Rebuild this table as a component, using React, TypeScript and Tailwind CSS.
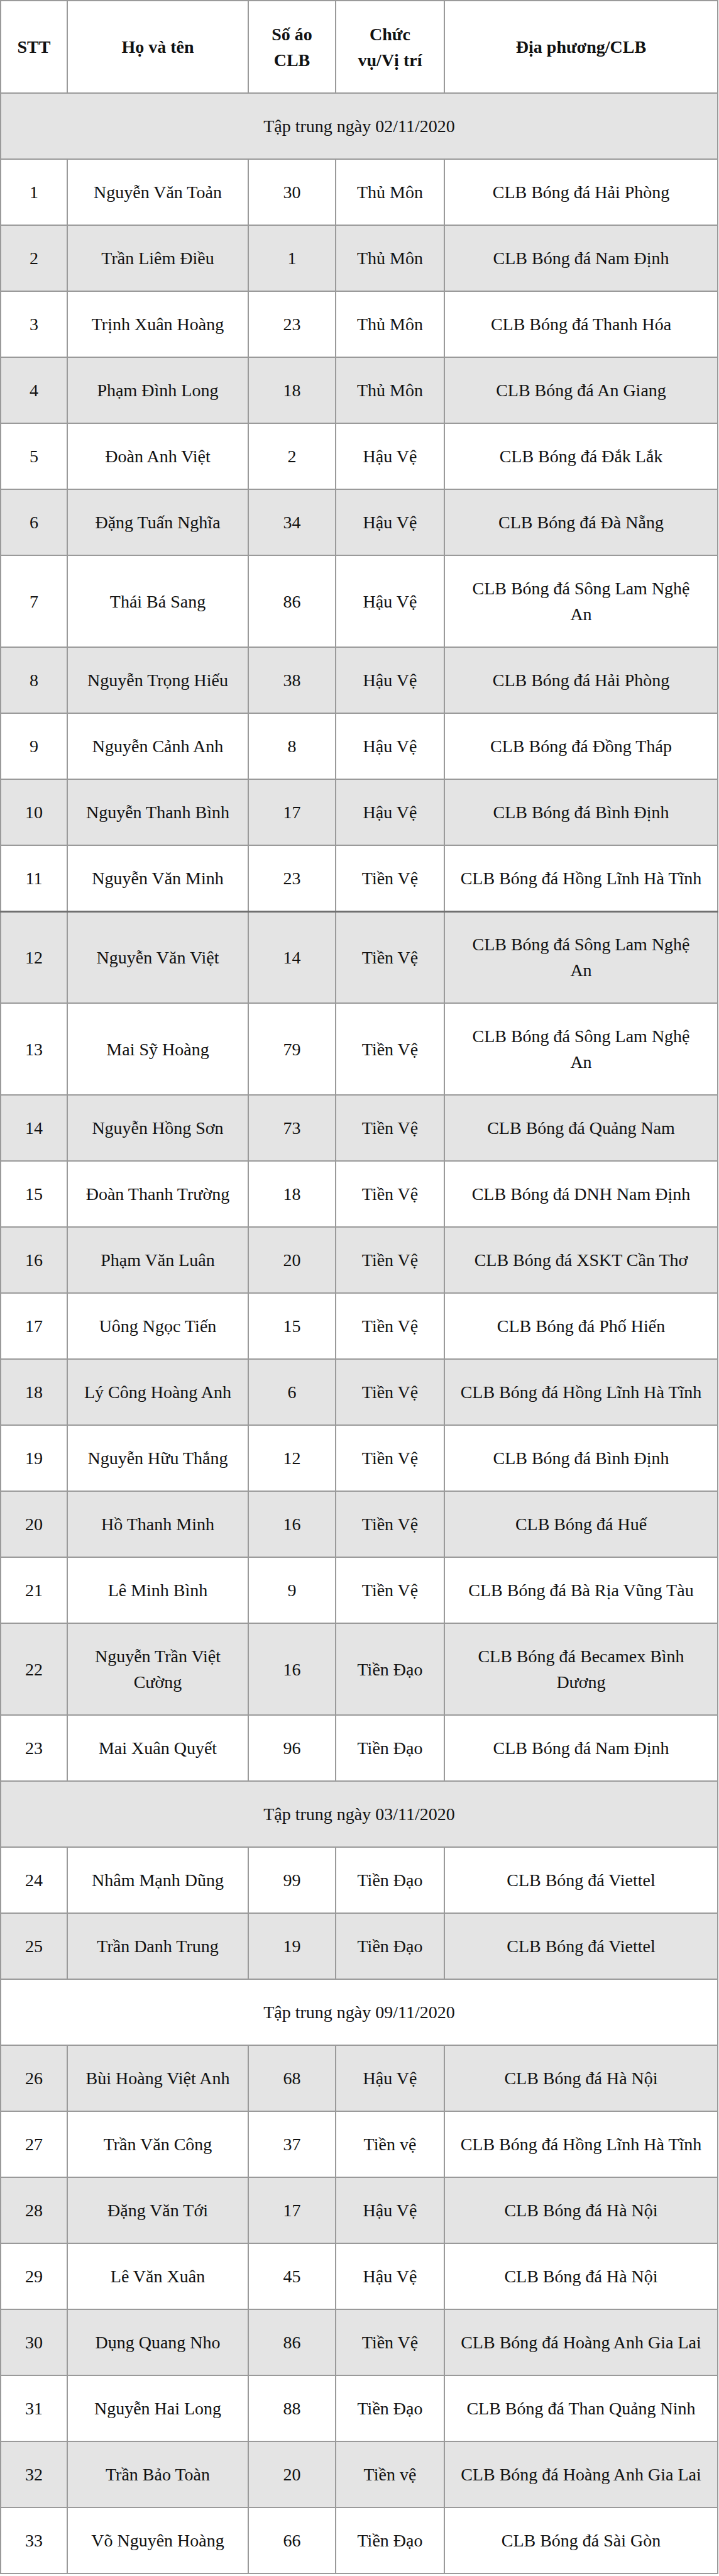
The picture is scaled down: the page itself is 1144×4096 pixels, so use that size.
import React from "react";

type Row =
  | { kind: "group"; text: string; shaded: boolean }
  | { kind: "data"; stt: number; name: React.ReactNode; num: string; pos: string; club: React.ReactNode; tall?: boolean };

const rows: Row[] = [
  { kind: "group", text: "Tập trung ngày 02/11/2020", shaded: true },
  { kind: "data", stt: 1, name: "Nguyễn Văn Toản", num: "30", pos: "Thủ Môn", club: "CLB Bóng đá Hải Phòng" },
  { kind: "data", stt: 2, name: "Trần Liêm Điều", num: "1", pos: "Thủ Môn", club: "CLB Bóng đá Nam Định" },
  { kind: "data", stt: 3, name: "Trịnh Xuân Hoàng", num: "23", pos: "Thủ Môn", club: "CLB Bóng đá Thanh Hóa" },
  { kind: "data", stt: 4, name: "Phạm Đình Long", num: "18", pos: "Thủ Môn", club: "CLB Bóng đá An Giang" },
  { kind: "data", stt: 5, name: "Đoàn Anh Việt", num: "2", pos: "Hậu Vệ", club: "CLB Bóng đá Đắk Lắk" },
  { kind: "data", stt: 6, name: "Đặng Tuấn Nghĩa", num: "34", pos: "Hậu Vệ", club: "CLB Bóng đá Đà Nẵng" },
  { kind: "data", stt: 7, name: "Thái Bá Sang", num: "86", pos: "Hậu Vệ", club: <>CLB Bóng đá Sông Lam Nghệ<br />An</>, tall: true },
  { kind: "data", stt: 8, name: "Nguyễn Trọng Hiếu", num: "38", pos: "Hậu Vệ", club: "CLB Bóng đá Hải Phòng" },
  { kind: "data", stt: 9, name: "Nguyễn Cảnh Anh", num: "8", pos: "Hậu Vệ", club: "CLB Bóng đá Đồng Tháp" },
  { kind: "data", stt: 10, name: "Nguyễn Thanh Bình", num: "17", pos: "Hậu Vệ", club: "CLB Bóng đá Bình Định" },
  { kind: "data", stt: 11, name: "Nguyễn Văn Minh", num: "23", pos: "Tiền Vệ", club: "CLB Bóng đá Hồng Lĩnh Hà Tĩnh" },
  { kind: "data", stt: 12, name: "Nguyễn Văn Việt", num: "14", pos: "Tiền Vệ", club: <>CLB Bóng đá Sông Lam Nghệ<br />An</>, tall: true },
  { kind: "data", stt: 13, name: "Mai Sỹ Hoàng", num: "79", pos: "Tiền Vệ", club: <>CLB Bóng đá Sông Lam Nghệ<br />An</>, tall: true },
  { kind: "data", stt: 14, name: "Nguyễn Hồng Sơn", num: "73", pos: "Tiền Vệ", club: "CLB Bóng đá Quảng Nam" },
  { kind: "data", stt: 15, name: "Đoàn Thanh Trường", num: "18", pos: "Tiền Vệ", club: "CLB Bóng đá DNH Nam Định" },
  { kind: "data", stt: 16, name: "Phạm Văn Luân", num: "20", pos: "Tiền Vệ", club: "CLB Bóng đá XSKT Cần Thơ" },
  { kind: "data", stt: 17, name: "Uông Ngọc Tiến", num: "15", pos: "Tiền Vệ", club: "CLB Bóng đá Phố Hiến" },
  { kind: "data", stt: 18, name: "Lý Công Hoàng Anh", num: "6", pos: "Tiền Vệ", club: "CLB Bóng đá Hồng Lĩnh Hà Tĩnh" },
  { kind: "data", stt: 19, name: "Nguyễn Hữu Thắng", num: "12", pos: "Tiền Vệ", club: "CLB Bóng đá Bình Định" },
  { kind: "data", stt: 20, name: "Hồ Thanh Minh", num: "16", pos: "Tiền Vệ", club: "CLB Bóng đá Huế" },
  { kind: "data", stt: 21, name: "Lê Minh Bình", num: "9", pos: "Tiền Vệ", club: "CLB Bóng đá Bà Rịa Vũng Tàu" },
  { kind: "data", stt: 22, name: <>Nguyễn Trần Việt<br />Cường</>, num: "16", pos: "Tiền Đạo", club: <>CLB Bóng đá Becamex Bình<br />Dương</>, tall: true },
  { kind: "data", stt: 23, name: "Mai Xuân Quyết", num: "96", pos: "Tiền Đạo", club: "CLB Bóng đá Nam Định" },
  { kind: "group", text: "Tập trung ngày 03/11/2020", shaded: true },
  { kind: "data", stt: 24, name: "Nhâm Mạnh Dũng", num: "99", pos: "Tiền Đạo", club: "CLB Bóng đá Viettel" },
  { kind: "data", stt: 25, name: "Trần Danh Trung", num: "19", pos: "Tiền Đạo", club: "CLB Bóng đá Viettel" },
  { kind: "group", text: "Tập trung ngày 09/11/2020", shaded: false },
  { kind: "data", stt: 26, name: "Bùi Hoàng Việt Anh", num: "68", pos: "Hậu Vệ", club: "CLB Bóng đá Hà Nội" },
  { kind: "data", stt: 27, name: "Trần Văn Công", num: "37", pos: "Tiền vệ", club: "CLB Bóng đá Hồng Lĩnh Hà Tĩnh" },
  { kind: "data", stt: 28, name: "Đặng Văn Tới", num: "17", pos: "Hậu Vệ", club: "CLB Bóng đá Hà Nội" },
  { kind: "data", stt: 29, name: "Lê Văn Xuân", num: "45", pos: "Hậu Vệ", club: "CLB Bóng đá Hà Nội" },
  { kind: "data", stt: 30, name: "Dụng Quang Nho", num: "86", pos: "Tiền Vệ", club: "CLB Bóng đá Hoàng Anh Gia Lai" },
  { kind: "data", stt: 31, name: "Nguyễn Hai Long", num: "88", pos: "Tiền Đạo", club: "CLB Bóng đá Than Quảng Ninh" },
  { kind: "data", stt: 32, name: "Trần Bảo Toàn", num: "20", pos: "Tiền vệ", club: "CLB Bóng đá Hoàng Anh Gia Lai" },
  { kind: "data", stt: 33, name: "Võ Nguyên Hoàng", num: "66", pos: "Tiền Đạo", club: "CLB Bóng đá Sài Gòn" },
];

const cell = "border-2 border-[#9a9a9a] p-0 text-center align-middle whitespace-nowrap";

export default function App() {
  return (
    <div className="w-[1144px] bg-white text-[#111] font-['Liberation_Serif','Times_New_Roman',serif] text-[28px] leading-[41px]">
      <table className="w-[1143px] table-fixed border-collapse">
        <colgroup>
          <col className="w-[106px]" />
          <col className="w-[288px]" />
          <col className="w-[139px]" />
          <col className="w-[173px]" />
          <col />
        </colgroup>
        <thead>
          <tr className="h-[147px]">
            <th className={cell + " font-bold"}>STT</th>
            <th className={cell + " font-bold"}>Họ và tên</th>
            <th className={cell + " font-bold"}>Số áo<br />CLB</th>
            <th className={cell + " font-bold"}>Chức<br />vụ/Vị trí</th>
            <th className={cell + " font-bold"}>Địa phương/CLB</th>
          </tr>
        </thead>
        <tbody>
          {rows.map((r, i) => {
            // Shading alternates across every body row, group rows included.
            const shaded = i % 2 === 0;
            if (r.kind === "group") {
              return (
                <tr key={i} className={(shaded ? "bg-[#e4e4e4] " : "bg-white ") + "h-[105px]"}>
                  <td colSpan={5} className={cell + " font-normal"}>{r.text}</td>
                </tr>
              );
            }
            const thick = r.stt === 12 ? " border-t-[3px] border-t-[#707070]" : "";
            return (
              <tr key={i} className={(shaded ? "bg-[#e4e4e4] " : "bg-white ") + (r.tall ? "h-[146px]" : "h-[105px]")}>
                <td className={cell + thick}>{r.stt}</td>
                <td className={cell + thick}>{r.name}</td>
                <td className={cell + thick}>{r.num}</td>
                <td className={cell + thick}>{r.pos}</td>
                <td className={cell + thick}>{r.club}</td>
              </tr>
            );
          })}
        </tbody>
      </table>
    </div>
  );
}
